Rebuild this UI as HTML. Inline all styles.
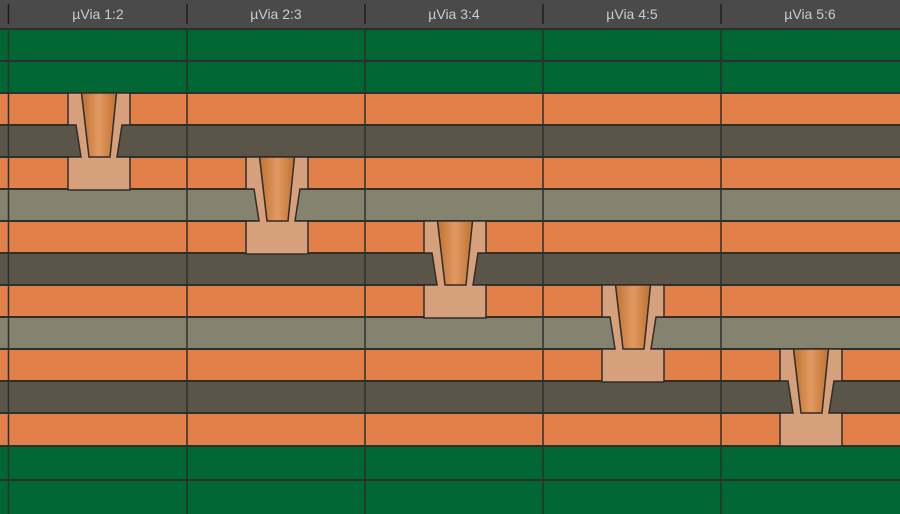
<!DOCTYPE html>
<html><head><style>
html,body{margin:0;padding:0;background:#4a4a4a;}
svg{display:block}
text{font-family:"Liberation Sans",sans-serif;font-size:14px;fill:#c5ccd4}
</style></head><body>
<svg width="900" height="514" xmlns="http://www.w3.org/2000/svg">
<defs>
<linearGradient id="cone" x1="0" x2="1" y1="0" y2="0">
<stop offset="0" stop-color="#c2702f"/><stop offset="0.5" stop-color="#e09a62"/><stop offset="1" stop-color="#c2702f"/>
</linearGradient>
</defs>
<rect x="0" y="0" width="900" height="29" fill="#4a4a4a"/>
<rect x="0" y="29" width="900" height="64" fill="#006633"/>
<rect x="0" y="93" width="900" height="32" fill="#e2804a"/>
<rect x="0" y="125" width="900" height="32" fill="#5a5548"/>
<rect x="0" y="157" width="900" height="32" fill="#e2804a"/>
<rect x="0" y="189" width="900" height="32" fill="#858270"/>
<rect x="0" y="221" width="900" height="32" fill="#e2804a"/>
<rect x="0" y="253" width="900" height="32" fill="#5a5548"/>
<rect x="0" y="285" width="900" height="32" fill="#e2804a"/>
<rect x="0" y="317" width="900" height="32" fill="#858270"/>
<rect x="0" y="349" width="900" height="32" fill="#e2804a"/>
<rect x="0" y="381" width="900" height="32" fill="#5a5548"/>
<rect x="0" y="413" width="900" height="33" fill="#e2804a"/>
<rect x="0" y="446" width="900" height="68" fill="#006633"/>
<g stroke="#2e2e2a" stroke-width="2">
<line x1="0" y1="29" x2="900" y2="29"/>
<line x1="0" y1="61" x2="900" y2="61"/>
<line x1="0" y1="93" x2="900" y2="93"/>
<line x1="0" y1="125" x2="900" y2="125"/>
<line x1="0" y1="157" x2="900" y2="157"/>
<line x1="0" y1="189" x2="900" y2="189"/>
<line x1="0" y1="221" x2="900" y2="221"/>
<line x1="0" y1="253" x2="900" y2="253"/>
<line x1="0" y1="285" x2="900" y2="285"/>
<line x1="0" y1="317" x2="900" y2="317"/>
<line x1="0" y1="349" x2="900" y2="349"/>
<line x1="0" y1="381" x2="900" y2="381"/>
<line x1="0" y1="413" x2="900" y2="413"/>
<line x1="0" y1="446" x2="900" y2="446"/>
<line x1="0" y1="480" x2="900" y2="480"/>
</g>
<g stroke="#2e2e2a" stroke-width="1.5">
<line x1="8.5" y1="29" x2="8.5" y2="514"/>
<line x1="187" y1="29" x2="187" y2="514"/>
<line x1="365" y1="29" x2="365" y2="514"/>
<line x1="543" y1="29" x2="543" y2="514"/>
<line x1="721" y1="29" x2="721" y2="514"/>
</g>
<g stroke="#1e1e1e" stroke-width="1.5">
<line x1="8.5" y1="4" x2="8.5" y2="24"/>
<line x1="187" y1="4" x2="187" y2="24"/>
<line x1="365" y1="4" x2="365" y2="24"/>
<line x1="543" y1="4" x2="543" y2="24"/>
<line x1="721" y1="4" x2="721" y2="24"/>
</g>
<text x="98" y="19" text-anchor="middle">µVia 1:2</text>
<text x="276" y="19" text-anchor="middle">µVia 2:3</text>
<text x="454" y="19" text-anchor="middle">µVia 3:4</text>
<text x="632" y="19" text-anchor="middle">µVia 4:5</text>
<text x="810" y="19" text-anchor="middle">µVia 5:6</text>

<g transform="translate(68,93)">
<path d="M0,0 H62 V32 H54 L49,64 H62 V97 H0 V64 H13 L8,32 H0 Z" fill="#d6a07c" stroke="#2e2e2a" stroke-width="1.5"/>
<path d="M13.5,0 H48.5 L42,64 H21 Z" fill="url(#cone)" stroke="#2e2e2a" stroke-width="1.5"/>
</g>
<g transform="translate(246,157)">
<path d="M0,0 H62 V32 H54 L49,64 H62 V97 H0 V64 H13 L8,32 H0 Z" fill="#d6a07c" stroke="#2e2e2a" stroke-width="1.5"/>
<path d="M13.5,0 H48.5 L42,64 H21 Z" fill="url(#cone)" stroke="#2e2e2a" stroke-width="1.5"/>
</g>
<g transform="translate(424,221)">
<path d="M0,0 H62 V32 H54 L49,64 H62 V97 H0 V64 H13 L8,32 H0 Z" fill="#d6a07c" stroke="#2e2e2a" stroke-width="1.5"/>
<path d="M13.5,0 H48.5 L42,64 H21 Z" fill="url(#cone)" stroke="#2e2e2a" stroke-width="1.5"/>
</g>
<g transform="translate(602,285)">
<path d="M0,0 H62 V32 H54 L49,64 H62 V97 H0 V64 H13 L8,32 H0 Z" fill="#d6a07c" stroke="#2e2e2a" stroke-width="1.5"/>
<path d="M13.5,0 H48.5 L42,64 H21 Z" fill="url(#cone)" stroke="#2e2e2a" stroke-width="1.5"/>
</g>
<g transform="translate(780,349)">
<path d="M0,0 H62 V32 H54 L49,64 H62 V97 H0 V64 H13 L8,32 H0 Z" fill="#d6a07c" stroke="#2e2e2a" stroke-width="1.5"/>
<path d="M13.5,0 H48.5 L42,64 H21 Z" fill="url(#cone)" stroke="#2e2e2a" stroke-width="1.5"/>
</g>
</svg>
</body></html>
